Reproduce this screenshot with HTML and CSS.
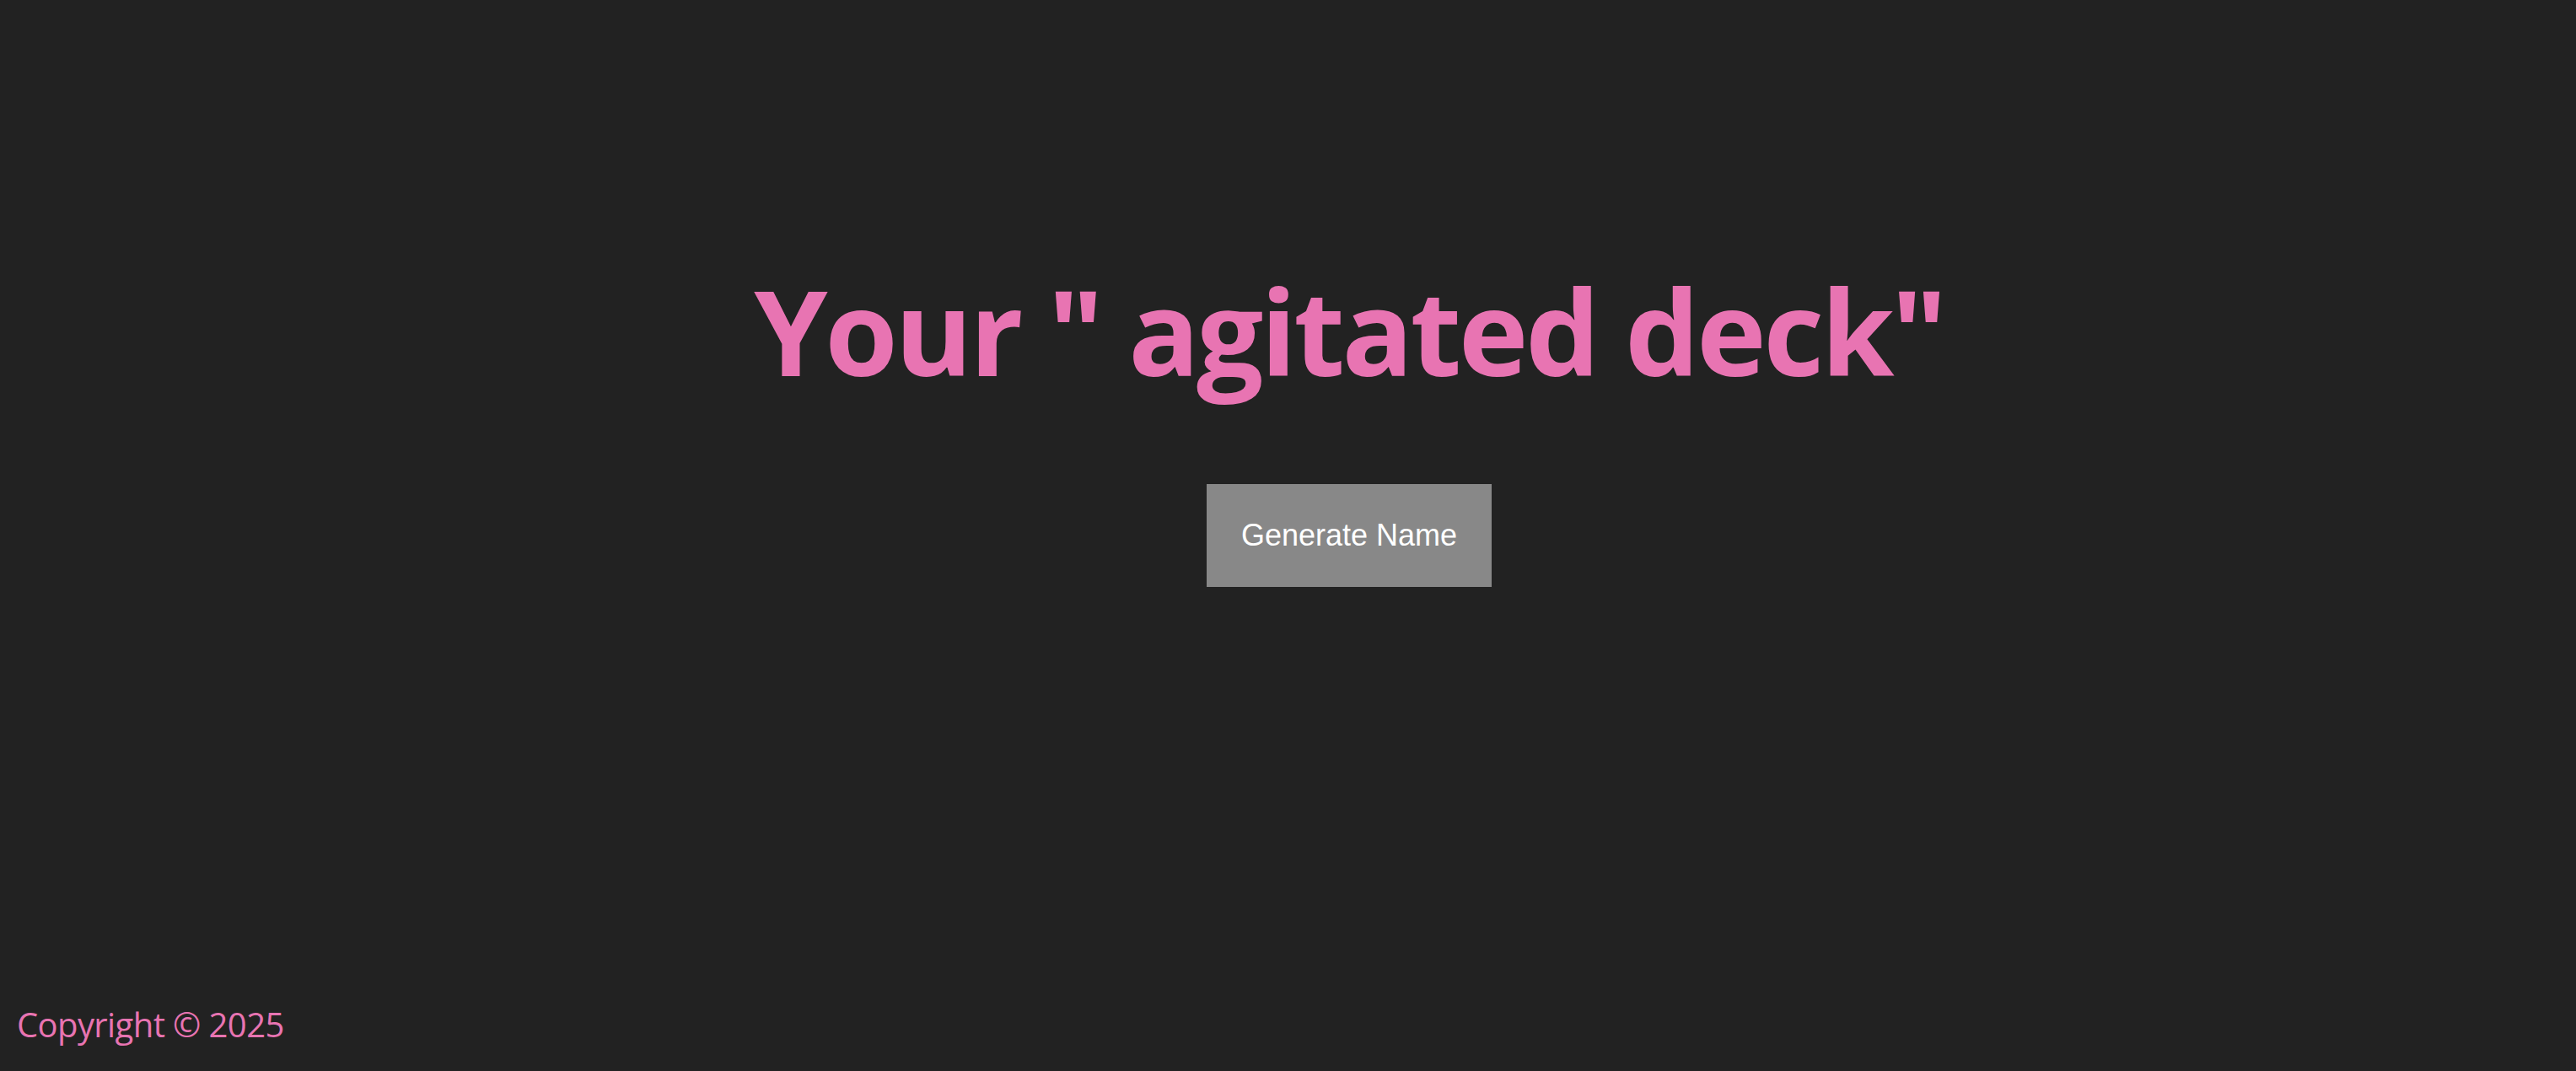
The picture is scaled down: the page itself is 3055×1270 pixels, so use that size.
FILE: index.html
```html
<!DOCTYPE html>
<html lang="en">
<head>
<meta charset="utf-8">
<title>Name Generator</title>
<link rel="stylesheet" href="styles.css">
</head>
<body>
<main class="main">
  <h1 class="title">Your " agitated deck"</h1>
  <button class="gen-btn" type="button">Generate Name</button>
</main>
<footer class="footer">Copyright © 2025</footer>
</body>
</html>
```
FILE: styles.css
```css
html, body {
  margin: 0;
  padding: 0;
}
body {
  background: #222222;
  min-height: 100vh;
  display: flex;
  flex-direction: column;
  font-family: "Open Sans", "Noto Sans", sans-serif;
  color: #e874b2;
}
.main {
  display: flex;
  flex-direction: column;
  align-items: center;
  padding-left: 145px;
}
.title {
  margin: 308px 0 0;
  font-size: 140px;
  line-height: 168px;
  font-weight: 700;
  letter-spacing: -3.5px;
  color: #e874b2;
  white-space: nowrap;
}
.gen-btn {
  margin-top: 98px;
  background: #888888;
  color: #ffffff;
  border: none;
  border-radius: 0;
  font-family: "Liberation Sans", Arial, sans-serif;
  font-size: 36px;
  line-height: 42px;
  padding: 40px 41px;
}
.footer {
  margin-top: auto;
  padding: 0 0 31px 20px;
  font-size: 40px;
  line-height: 48px;
  letter-spacing: -0.6px;
  color: #e874b2;
}
```
